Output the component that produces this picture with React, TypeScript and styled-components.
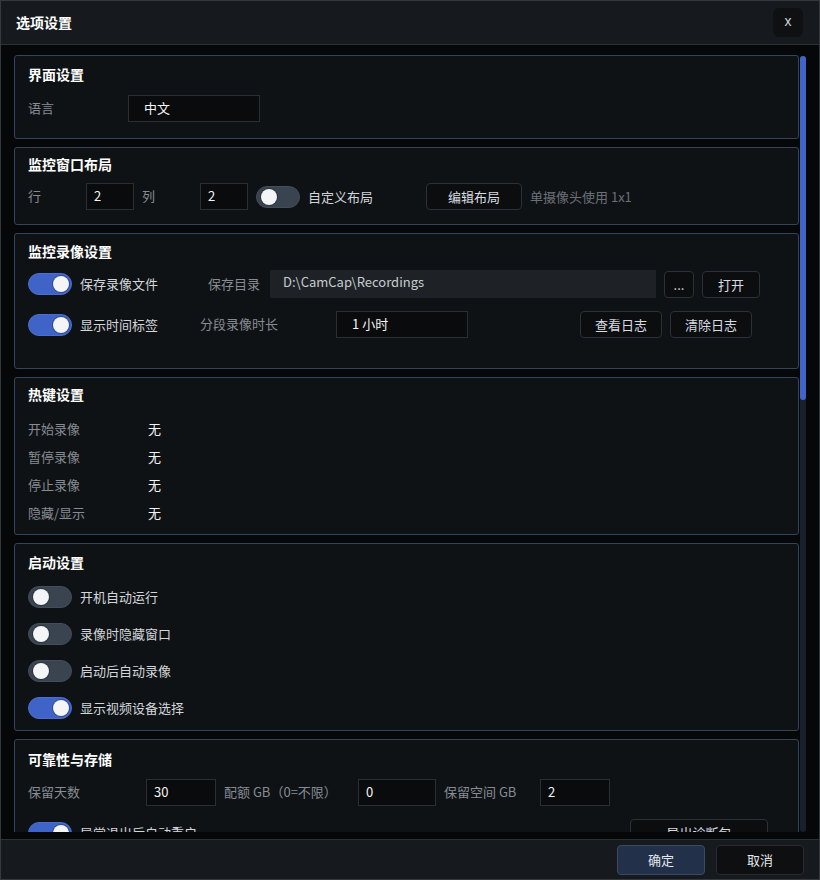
import React from "react";
import styled, { createGlobalStyle } from "styled-components";

const GlobalStyle = createGlobalStyle`
  html, body {
    margin: 0;
    padding: 0;
    background: #060708;
  }
  * {
    box-sizing: border-box;
  }
  body {
    font-family: "Noto Sans CJK SC", "Noto Sans", "Liberation Sans", sans-serif;
    font-size: 13px;
    color: #e6e8ea;
  }
`;

const Window = styled.div`
  width: 820px;
  height: 880px;
  display: flex;
  flex-direction: column;
  border: 1px solid #34393e;
  background: #060708;
  overflow: hidden;
`;

const Header = styled.div`
  height: 44px;
  flex: none;
  display: flex;
  align-items: center;
  justify-content: space-between;
  padding: 0 16px 1px 15px;
  background: #161a1e;
  border-bottom: 1px solid #2b3137;
`;

const HeaderTitle = styled.div`
  font-size: 14px;
  font-weight: 700;
  color: #ffffff;
`;

const CloseButton = styled.button`
  width: 30px;
  height: 29px;
  border: none;
  border-radius: 6px;
  background: #0f1012;
  color: #d0d3d6;
  font-family: "Liberation Sans", sans-serif;
  font-size: 14px;
  line-height: 1;
  padding: 0 0 2px;
`;

const Body = styled.div`
  flex: 1;
  min-height: 0;
  display: flex;
  padding: 10px 13px 7px 13px;
`;

const Content = styled.div`
  flex: 1;
  min-width: 0;
  overflow: hidden;
  display: flex;
  flex-direction: column;
  gap: 8px;
`;

const ScrollTrack = styled.div`
  width: 6px;
  margin: 1px 0 0 1px;
  border-radius: 3px;
  background: #19202a;
  display: flex;
  flex-direction: column;
`;

const ScrollThumb = styled.div`
  height: 344px;
  border-radius: 3px;
  background: #4264c6;
`;

const Section = styled.section<{ $pt: number; $pb: number }>`
  flex: none;
  border: 1px solid #33455a;
  border-radius: 3px;
  background: #0f1215;
  padding: ${(p) => p.$pt}px 13px ${(p) => p.$pb}px 13px;
`;

const SectionTitle = styled.div<{ $mb: number }>`
  height: 20px;
  line-height: 19px;
  font-size: 14px;
  font-weight: 700;
  color: #ffffff;
  margin-bottom: ${(p) => p.$mb}px;
`;

const Rows = styled.div<{ $gap: number }>`
  display: flex;
  flex-direction: column;
  gap: ${(p) => p.$gap}px;
`;

const Row = styled.div<{ $h?: number }>`
  display: flex;
  align-items: center;
  height: ${(p) => p.$h ?? 27}px;
`;

const Label = styled.span<{ $w?: number; $ml?: number }>`
  flex: none;
  width: ${(p) => (p.$w ? `${p.$w}px` : "auto")};
  margin-left: ${(p) => p.$ml ?? 0}px;
  color: #878c93;
  white-space: nowrap;
  padding-bottom: 2px;
`;

const Text = styled.span<{ $w?: number; $ml?: number }>`
  flex: none;
  width: ${(p) => (p.$w ? `${p.$w}px` : "auto")};
  margin-left: ${(p) => p.$ml ?? 0}px;
  color: #d2d6da;
  white-space: nowrap;
  padding-bottom: 1px;
`;

const Value = styled.span`
  color: #f2f3f4;
  padding-bottom: 2px;
`;

const Hint = styled.span<{ $ml?: number }>`
  margin-left: ${(p) => p.$ml ?? 0}px;
  color: #6b7077;
  white-space: nowrap;
`;

const Field = styled.div<{ $w: number; $ml?: number; $pl?: number }>`
  flex: none;
  width: ${(p) => p.$w}px;
  height: 27px;
  margin-left: ${(p) => p.$ml ?? 0}px;
  padding-left: ${(p) => p.$pl ?? 7}px;
  display: flex;
  align-items: center;
  background: #0a0b0c;
  border: 1px solid #2a2f35;
  color: #f4f5f6;
  padding-bottom: 2px;
`;

const PathField = styled.div<{ $ml?: number }>`
  flex: 1;
  height: 28px;
  margin-left: ${(p) => p.$ml ?? 0}px;
  padding: 0 13px 6px;
  display: flex;
  align-items: center;
  background: #1e2226;
  color: #c8ccd1;
`;

const Button = styled.button<{ $w: number; $ml?: number }>`
  flex: none;
  width: ${(p) => p.$w}px;
  height: 27px;
  margin-left: ${(p) => p.$ml ?? 0}px;
  padding: 0;
  border: 1px solid #2b3138;
  border-radius: 4px;
  background: #0b0d0f;
  color: #d8dce0;
  font-family: inherit;
  font-size: 13px;
`;

const Spacer = styled.span<{ $w: number }>`
  flex: none;
  width: ${(p) => p.$w}px;
`;

const Switch = styled.span<{ $on: boolean; $ml?: number }>`
  flex: none;
  position: relative;
  width: 44px;
  height: 22px;
  margin-left: ${(p) => p.$ml ?? 0}px;
  border-radius: 11px;
  background: ${(p) => (p.$on ? "#3f63c6" : "#3a4350")};
  border: 1px solid ${(p) => (p.$on ? "#4a6fd3" : "#434d5b")};

  &::after {
    content: "";
    position: absolute;
    top: 2px;
    left: ${(p) => (p.$on ? "24px" : "4px")};
    width: 16px;
    height: 16px;
    border-radius: 50%;
    background: #f4f5f7;
    box-shadow: 0 0 0 1px rgba(20, 24, 30, 0.35);
  }
`;

const Footer = styled.div`
  height: 40px;
  flex: none;
  display: flex;
  align-items: center;
  justify-content: flex-end;
  gap: 11px;
  padding: 0 15px 0 0;
  background: #161a1e;
  border-top: 1px solid #2b3137;
`;

const FooterButton = styled.button<{ $primary?: boolean }>`
  width: 88px;
  height: 30px;
  border-radius: 4px;
  border: 1px solid ${(p) => (p.$primary ? "#3a4a60" : "#272b30")};
  background: ${(p) => (p.$primary ? "#22304a" : "#0e0f11")};
  color: #e4e7ea;
  font-family: inherit;
  font-size: 13px;
  padding: 0;
`;

const hotkeys = ["开始录像", "暂停录像", "停止录像", "隐藏/显示"];

const startup: { label: string; on: boolean }[] = [
  { label: "开机自动运行", on: false },
  { label: "录像时隐藏窗口", on: false },
  { label: "启动后自动录像", on: false },
  { label: "显示视频设备选择", on: true },
];

export default function App() {
  return (
    <>
      <GlobalStyle />
      <Window>
        <Header>
          <HeaderTitle>选项设置</HeaderTitle>
          <CloseButton>x</CloseButton>
        </Header>

        <Body>
          <Content>
            <Section $pt={9} $pb={16}>
              <SectionTitle $mb={10}>界面设置</SectionTitle>
              <Row>
                <Label $w={100}>语言</Label>
                <Field $w={132} $pl={15}>中文</Field>
              </Row>
            </Section>

            <Section $pt={7} $pb={14}>
              <SectionTitle $mb={8}>监控窗口布局</SectionTitle>
              <Row>
                <Label $w={50}>行</Label>
                <Field $w={48} $ml={8}>2</Field>
                <Label $w={50} $ml={8}>列</Label>
                <Field $w={48} $ml={8}>2</Field>
                <Switch $on={false} $ml={8} />
                <Text $w={110} $ml={8}>自定义布局</Text>
                <Button $w={96} $ml={8}>编辑布局</Button>
                <Hint $ml={8}>单摄像头使用 1x1</Hint>
              </Row>
            </Section>

            <Section $pt={8} $pb={30}>
              <SectionTitle $mb={8}>监控录像设置</SectionTitle>
              <Rows $gap={13}>
                <Row $h={28}>
                  <Switch $on />
                  <Text $w={128} $ml={8}>保存录像文件</Text>
                  <Label $w={62}>保存目录</Label>
                  <PathField>D:\CamCap\Recordings</PathField>
                  <Button $w={30} $ml={8}>...</Button>
                  <Button $w={58} $ml={8}>打开</Button>
                  <Spacer $w={25} />
                </Row>
                <Row>
                  <Switch $on />
                  <Text $w={120} $ml={8}>显示时间标签</Text>
                  <Label $w={136}>分段录像时长</Label>
                  <Field $w={132} $pl={15}>1 小时</Field>
                  <Button $w={82} $ml={112}>查看日志</Button>
                  <Button $w={82} $ml={8}>清除日志</Button>
                </Row>
              </Rows>
            </Section>

            <Section $pt={7} $pb={7}>
              <SectionTitle $mb={10}>热键设置</SectionTitle>
              {hotkeys.map((k) => (
                <Row key={k} $h={28}>
                  <Label $w={120}>{k}</Label>
                  <Value>无</Value>
                </Row>
              ))}
            </Section>

            <Section $pt={9} $pb={11}>
              <SectionTitle $mb={13}>启动设置</SectionTitle>
              <Rows $gap={15}>
                {startup.map((s) => (
                  <Row key={s.label} $h={22}>
                    <Switch $on={s.on} />
                    <Text $ml={8}>{s.label}</Text>
                  </Row>
                ))}
              </Rows>
            </Section>

            <Section $pt={10} $pb={14}>
              <SectionTitle $mb={9}>可靠性与存储</SectionTitle>
              <Rows $gap={13}>
                <Row>
                  <Label $w={118}>保留天数</Label>
                  <Field $w={70}>30</Field>
                  <Label $w={126} $ml={8}>配额 GB（0=不限）</Label>
                  <Field $w={78} $ml={8}>0</Field>
                  <Label $w={88} $ml={8}>保留空间 GB</Label>
                  <Field $w={70} $ml={8}>2</Field>
                </Row>
                <Row>
                  <Switch $on />
                  <Text $w={550} $ml={8}>异常退出后自动重启</Text>
                  <Button $w={138}>导出诊断包</Button>
                </Row>
              </Rows>
            </Section>
          </Content>
          <ScrollTrack>
            <ScrollThumb />
          </ScrollTrack>
        </Body>

        <Footer>
          <FooterButton $primary>确定</FooterButton>
          <FooterButton>取消</FooterButton>
        </Footer>
      </Window>
    </>
  );
}
